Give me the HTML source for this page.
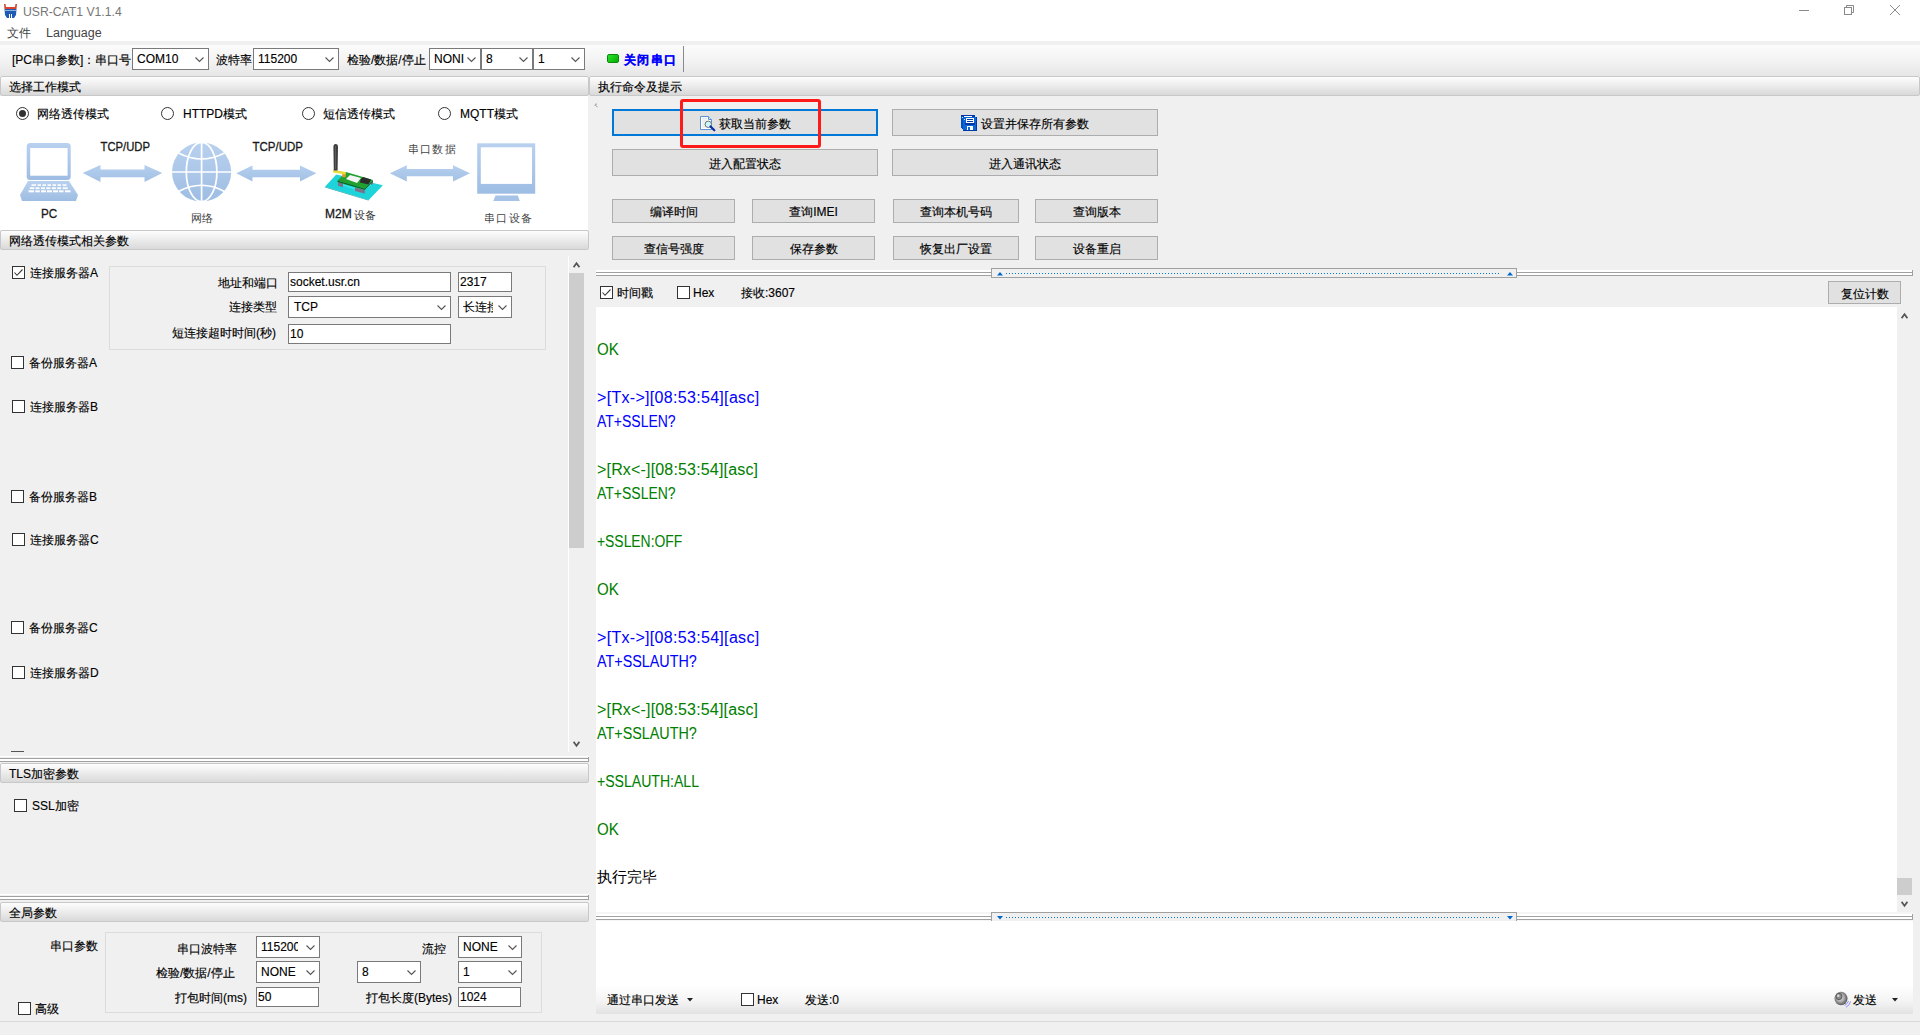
<!DOCTYPE html>
<html><head><meta charset="utf-8">
<style>
*{box-sizing:border-box;margin:0;padding:0}
html,body{width:1920px;height:1035px;overflow:hidden;background:#f0f0f0;font-family:"Liberation Sans",sans-serif;font-size:12px;color:#000;position:relative;-webkit-text-stroke:0.15px currentColor}
.a{position:absolute;white-space:nowrap;line-height:12px}
.hdr{position:absolute;height:20px;border:1px solid #c8c8c8;border-radius:2px;background:linear-gradient(#fdfdfd,#f3f3f3 30%,#d9d9d9)}
.hdr span{position:absolute;left:8px;top:4px;line-height:12px;white-space:nowrap}
.cb{position:absolute;width:13px;height:13px;border:1px solid #333;background:#fff}
.cmb{position:absolute;border:1px solid #7a7a7a;background:#fff;height:22px}
.cmb span{position:absolute;left:4px;top:4px;line-height:12px;font-size:12px;white-space:nowrap}
.chev{position:absolute;right:4px;top:8px;width:9px;height:6px}
.tb{position:absolute;border:1px solid #7a7a7a;background:#fff;height:20px}
.tb span{position:absolute;left:1px;top:3px;line-height:12px}
.btn{position:absolute;background:#e1e1e1;border:1px solid #adadad;text-align:center;line-height:12px}
.btn span{position:absolute;left:0;right:0;top:50%;margin-top:-5px;line-height:12px;white-space:nowrap}
.grp{position:absolute;border:1px solid #dcdcdc}
.rx{position:absolute;left:1px;font-size:16px;line-height:16px;white-space:nowrap;transform-origin:0 0}
.blue{color:#0000ff}.green{color:#008000}
.rx{-webkit-text-stroke:0.05px currentColor}
.split{position:absolute;height:8px}
</style></head><body>

<!-- title bar + menu -->
<div style="position:absolute;left:0;top:0;width:1920px;height:41px;background:#fff"></div>
<svg style="position:absolute;left:4px;top:4px" width="13" height="14" viewBox="0 0 13 14">
 <path d="M0 0 L1.5 0 L2 3 L11 3 L11.5 0 L13 0 L12.5 5 L0.5 5 Z" fill="#d8442e"/>
 <path d="M0.5 5 L12.5 5 L12 11 L10 14 L8 14 L8 10 L7 10 L7 14 L6 14 L6 10 L5 10 L5 14 L3 14 L1 11 Z" fill="#1f5bb5"/>
 <rect x="1" y="6" width="11" height="1" fill="#8fb0e0"/>
</svg>
<div class="a" style="left:23px;top:6px;color:#767676;font-size:12.2px;line-height:13px;-webkit-text-stroke:0">USR-CAT1 V1.1.4</div>
<div class="a" style="left:7px;top:27px;color:#444;-webkit-text-stroke:0">文件</div>
<div class="a" style="left:46px;top:27px;color:#444;font-size:12.5px;-webkit-text-stroke:0">Language</div>
<!-- window controls -->
<div style="position:absolute;left:1799px;top:10px;width:10px;height:1px;background:#8a8a8a"></div>
<svg style="position:absolute;left:1844px;top:5px" width="10" height="10" viewBox="0 0 10 10"><rect x="0.5" y="2.5" width="7" height="7" fill="none" stroke="#8a8a8a"/><path d="M2.5 2.5 V0.5 H9.5 V7.5 H7.5" fill="none" stroke="#8a8a8a"/></svg>
<svg style="position:absolute;left:1890px;top:5px" width="10" height="10" viewBox="0 0 10 10"><path d="M0 0 L10 10 M10 0 L0 10" stroke="#8a8a8a" stroke-width="1"/></svg>

<!-- toolbar -->
<div style="position:absolute;left:0;top:45px;width:1920px;height:31px;background:linear-gradient(#fbfbfb,#f3f3f3 50%,#e6e6e6)"></div>


<div class="a" style="left:12px;top:54px">[PC串口参数]：串口号</div>
<div class="cmb" style="left:132px;top:48px;width:77px"><span style="top:4px">COM10</span><svg class="chev" viewBox="0 0 9 6"><path d="M0.5 0.5 L4.5 4.5 L8.5 0.5" fill="none" stroke="#555" stroke-width="1.1"/></svg></div>
<div class="a" style="left:216px;top:54px">波特率</div>
<div class="cmb" style="left:253px;top:48px;width:86px"><span>115200</span><svg class="chev" viewBox="0 0 9 6"><path d="M0.5 0.5 L4.5 4.5 L8.5 0.5" fill="none" stroke="#555" stroke-width="1.1"/></svg></div>
<div class="a" style="left:347px;top:54px">检验/数据/停止</div>
<div class="cmb" style="left:429px;top:48px;width:52px;overflow:hidden"><span>NONI</span><svg class="chev" viewBox="0 0 9 6"><path d="M0.5 0.5 L4.5 4.5 L8.5 0.5" fill="none" stroke="#555" stroke-width="1.1"/></svg></div>
<div class="cmb" style="left:481px;top:48px;width:52px"><span>8</span><svg class="chev" viewBox="0 0 9 6"><path d="M0.5 0.5 L4.5 4.5 L8.5 0.5" fill="none" stroke="#555" stroke-width="1.1"/></svg></div>
<div class="cmb" style="left:533px;top:48px;width:52px"><span>1</span><svg class="chev" viewBox="0 0 9 6"><path d="M0.5 0.5 L4.5 4.5 L8.5 0.5" fill="none" stroke="#555" stroke-width="1.1"/></svg></div>
<div style="position:absolute;left:607px;top:54px;width:12px;height:9px;border-radius:2px;background:linear-gradient(135deg,#2ee02e,#00b000);border:1px solid #0a8a0a"></div>
<div class="a" style="left:624px;top:54px;color:#0000ff;font-weight:bold;letter-spacing:1.3px">关闭串口</div>
<div style="position:absolute;left:683px;top:46px;width:1px;height:26px;background:#8a8a8a"></div>

<!-- LEFT PANEL -->
<div class="hdr" style="left:0;top:76px;width:589px"><span>选择工作模式</span></div>
<div style="position:absolute;left:0;top:96px;width:588px;height:134px;background:#fff"></div>
<!-- radios -->
<svg style="position:absolute;left:16px;top:107px" width="13" height="13" viewBox="0 0 13 13"><circle cx="6.5" cy="6.5" r="6" fill="#fff" stroke="#333"/><circle cx="6.5" cy="6.5" r="3.5" fill="#333"/></svg>
<div class="a" style="left:37px;top:108px">网络透传模式</div>
<svg style="position:absolute;left:161px;top:107px" width="13" height="13" viewBox="0 0 13 13"><circle cx="6.5" cy="6.5" r="6" fill="#fff" stroke="#333"/></svg>
<div class="a" style="left:183px;top:108px">HTTPD模式</div>
<svg style="position:absolute;left:302px;top:107px" width="13" height="13" viewBox="0 0 13 13"><circle cx="6.5" cy="6.5" r="6" fill="#fff" stroke="#333"/></svg>
<div class="a" style="left:323px;top:108px">短信透传模式</div>
<svg style="position:absolute;left:438px;top:107px" width="13" height="13" viewBox="0 0 13 13"><circle cx="6.5" cy="6.5" r="6" fill="#fff" stroke="#333"/></svg>
<div class="a" style="left:460px;top:108px">MQTT模式</div>
<!-- DIAGRAM -->
<svg style="position:absolute;left:0;top:130px" width="588" height="100" viewBox="0 130 588 100">
 <defs>
  <linearGradient id="bl" x1="0" y1="0" x2="0" y2="1"><stop offset="0" stop-color="#b9d1ef"/><stop offset="1" stop-color="#9ebde3"/></linearGradient>
  <linearGradient id="bl2" x1="0" y1="0" x2="0" y2="1"><stop offset="0" stop-color="#b5cfee"/><stop offset="1" stop-color="#a3c1e5"/></linearGradient>
 </defs>
 <!-- laptop -->
 <rect x="26.7" y="143" width="44" height="37" rx="3.5" fill="url(#bl)"/>
 <rect x="30.2" y="148" width="37.4" height="27.7" fill="#fff"/>
 <path d="M28 181 L69 181 L78 195 L76 201 L22 201 L20 195 Z" fill="url(#bl)"/>
 <rect x="37" y="180" width="23" height="1" fill="#fff"/>
 <g fill="#fff">
  <rect x="31.5" y="184.3" width="4.5" height="1.6"/><rect x="37.5" y="184.3" width="3.5" height="1.6"/><rect x="42.5" y="184.3" width="3.5" height="1.6"/><rect x="47.5" y="184.3" width="3.5" height="1.6"/><rect x="52.5" y="184.3" width="3.5" height="1.6"/><rect x="57.5" y="184.3" width="3.5" height="1.6"/><rect x="62.5" y="184.3" width="4" height="1.6"/>
  <rect x="29.8" y="187.3" width="4.5" height="1.8"/><rect x="35.5" y="187.3" width="4" height="1.8"/><rect x="41" y="187.3" width="4" height="1.8"/><rect x="46.3" y="187.3" width="4" height="1.8"/><rect x="51.8" y="187.3" width="4" height="1.8"/><rect x="57.2" y="187.3" width="4" height="1.8"/><rect x="62.7" y="187.3" width="5" height="1.8"/>
  <rect x="28.5" y="190.3" width="5.5" height="2"/><rect x="35.3" y="190.3" width="4.5" height="2"/><rect x="41" y="190.3" width="5" height="2"/><rect x="47" y="190.3" width="5" height="2"/><rect x="53" y="190.3" width="5" height="2"/><rect x="59" y="190.3" width="4.5" height="2"/><rect x="65" y="190.3" width="5.5" height="2"/>
 </g>
 <!-- arrows -->
 <path d="M82.7 173 L100.5 164.9 L100.5 169.5 L144.5 169.5 L144.5 164.9 L162.3 173 L144.5 181.9 L144.5 177.2 L100.5 177.2 L100.5 181.9 Z" fill="url(#bl2)"/>
 <path d="M236.3 173.3 L252.5 165.4 L252.5 169.8 L300 169.8 L300 165.4 L316.3 173.3 L300 181.5 L300 177.2 L252.5 177.2 L252.5 181.5 Z" fill="url(#bl2)"/>
 <path d="M389.8 173.2 L406.8 165.2 L406.8 169 L453 169 L453 165.2 L470 173.2 L453 181.6 L453 176.2 L406.8 176.2 L406.8 181.6 Z" fill="url(#bl2)"/>
 <!-- globe -->
 <circle cx="201.6" cy="172" r="29.6" fill="url(#bl)"/>
 <g fill="none" stroke="#fff" stroke-width="1.7">
  <line x1="201.6" y1="142" x2="201.6" y2="202"/>
  <line x1="171" y1="172" x2="232" y2="172"/>
  <ellipse cx="201.6" cy="172" rx="15.3" ry="29.6"/>
  <path d="M178.5 153 Q201.6 165 224.5 153"/>
  <path d="M178.5 191.5 Q201.6 179 224.5 191.5"/>
 </g>
 <!-- M2M device -->
 <path d="M325 186.7 L336.2 174.5 L382.9 185.3 L368.7 199.9 Z" fill="#1cd4da"/>
 <path d="M325 186.7 L368.7 199.9 L368.5 200.6 L325.3 187.4 Z" fill="#0fa0a8"/>
 <path d="M343 184 L355 187.5 L365 185 L373 181 L373 183 L364.5 191 L355 189.5 L343 186 Z" fill="#30e4ea"/>
 <path d="M338 182 L343 183.5 L343 187.3 L338 185.8 Z" fill="#7d7088"/>
 <path d="M355 187.5 L364.8 190 L364.8 193.5 L355 191 Z" fill="#7d7088"/>
 <path d="M371 182 L373 181 L373 184 L371 185 Z" fill="#7d7088"/>
 <path d="M337.5 180.5 L346 172 L373 180 L364.5 188.5 Z" fill="#22a030"/>
 <path d="M337.5 180.5 L364.5 188.5 L373 180 L373 181.5 L364.8 190 L337.5 182 Z" fill="#0c6a18"/>
 <path d="M346 179 L350 175 L361 178 L357 183 Z" fill="#f4f4f4"/>
 <path d="M360.5 179.5 L363 177 L371 179.5 L368.5 184.5 L360 182.5 Z" fill="#2b2b2b"/>
 <rect x="342.3" y="172.5" width="3.4" height="4.7" fill="#e09a30"/>
 <path d="M333.2 169.8 L345.7 172 L345.7 174.5 L333.2 172.5 Z" fill="#e6dc3a"/>
 <path d="M333.4 147 Q333.4 144 335.7 144 Q338 144 338 147 L337.6 170.5 L333.8 170.5 Z" fill="#3e3e3e"/>
 <rect x="335" y="146" width="1" height="23" fill="#707070" opacity="0.6"/>
 <!-- monitor -->
 <rect x="477.2" y="143.3" width="58" height="50.4" fill="url(#bl)"/>
 <rect x="480.8" y="147.3" width="51.2" height="36.6" fill="#fff"/>
 <path d="M493.3 201 L495.5 195.5 L517.8 195.5 L519.8 201 Z" fill="#a6c2e6"/>
 <!-- labels -->
 <text x="100.5" y="151.3" font-family="Liberation Sans" font-size="12" fill="#1a1a1a" textLength="49.5" lengthAdjust="spacingAndGlyphs" stroke="#1a1a1a" stroke-width="0.3">TCP/UDP</text>
 <text x="252.5" y="151.3" font-family="Liberation Sans" font-size="12" fill="#1a1a1a" textLength="50.5" lengthAdjust="spacingAndGlyphs" stroke="#1a1a1a" stroke-width="0.3">TCP/UDP</text>
 <text x="41" y="217.6" font-family="Liberation Sans" font-size="12" fill="#1a1a1a" stroke="#1a1a1a" stroke-width="0.3" textLength="16.2" lengthAdjust="spacingAndGlyphs">PC</text>
 <text x="325" y="218" font-family="Liberation Sans" font-size="12" fill="#1a1a1a" stroke="#1a1a1a" stroke-width="0.3">M2M</text>
 <text x="354" y="218.5" font-family="Liberation Serif" font-size="11" fill="#333">设备</text>
 <text x="190.5" y="221.5" font-family="Liberation Serif" font-size="11" fill="#444">网络</text>
 <text x="407.5" y="153" font-family="Liberation Serif" font-size="11" fill="#444" letter-spacing="1.4">串口数据</text>
 <text x="484" y="222" font-family="Liberation Serif" font-size="11" fill="#444" letter-spacing="1.4">串口设备</text>
</svg>

<div class="hdr" style="left:0;top:230px;width:589px"><span>网络透传模式相关参数</span></div>
<!-- servers -->
<div class="cb" style="left:12px;top:266px"><svg width="11" height="11" viewBox="0 0 11 11" style="position:absolute;left:0;top:0"><path d="M1.5 5.5 L4 8.3 L9.5 2.5" fill="none" stroke="#3a3a3a" stroke-width="1.1"/></svg></div>
<div class="a" style="left:30px;top:267px">连接服务器A</div>
<div class="grp" style="left:109px;top:266px;width:437px;height:84px"></div>
<div class="a" style="left:218px;top:277px">地址和端口</div>
<div class="tb" style="left:288px;top:272px;width:163px"><span>socket.usr.cn</span></div>
<div class="tb" style="left:458px;top:272px;width:54px"><span>2317</span></div>
<div class="a" style="left:229px;top:301px">连接类型</div>
<div class="cmb" style="left:288px;top:296px;width:163px"><span style="left:5px">TCP</span><svg class="chev" viewBox="0 0 9 6"><path d="M0.5 0.5 L4.5 4.5 L8.5 0.5" fill="none" stroke="#555" stroke-width="1.1"/></svg></div>
<div class="cmb" style="left:458px;top:296px;width:54px;overflow:hidden"><span style="width:30px;overflow:hidden">长连接</span><svg class="chev" viewBox="0 0 9 6"><path d="M0.5 0.5 L4.5 4.5 L8.5 0.5" fill="none" stroke="#555" stroke-width="1.1"/></svg></div>
<div class="a" style="left:172px;top:327px">短连接超时时间(秒)</div>
<div class="tb" style="left:288px;top:324px;width:163px"><span>10</span></div>

<div class="cb" style="left:11px;top:356px"></div><div class="a" style="left:29px;top:357px">备份服务器A</div>
<div class="cb" style="left:12px;top:400px"></div><div class="a" style="left:30px;top:401px">连接服务器B</div>
<div class="cb" style="left:11px;top:490px"></div><div class="a" style="left:29px;top:491px">备份服务器B</div>
<div class="cb" style="left:12px;top:533px"></div><div class="a" style="left:30px;top:534px">连接服务器C</div>
<div class="cb" style="left:11px;top:621px"></div><div class="a" style="left:29px;top:622px">备份服务器C</div>
<div class="cb" style="left:12px;top:666px"></div><div class="a" style="left:30px;top:667px">连接服务器D</div>
<div style="position:absolute;left:11px;top:751px;width:13px;height:1px;background:#555"></div>
<!-- left scrollbar -->
<div style="position:absolute;left:568px;top:256px;width:1px;height:496px;background:#fff"></div>
<svg style="position:absolute;left:573px;top:261px" width="7" height="8" viewBox="0 0 7 8"><path d="M0.6 6.2 L3.5 2.2 L6.4 6.2" fill="none" stroke="#555" stroke-width="1.7"/></svg>
<div style="position:absolute;left:569px;top:273px;width:15px;height:275px;background:#cdcdcd"></div>
<svg style="position:absolute;left:573px;top:740px" width="7" height="8" viewBox="0 0 7 8"><path d="M0.6 1.8 L3.5 5.8 L6.4 1.8" fill="none" stroke="#555" stroke-width="1.7"/></svg>
<!-- separator -->
<div style="position:absolute;left:0;top:756px;width:589px;height:6px;border-top:1px solid #fff"><div style="position:absolute;left:0;top:1px;width:589px;height:1px;background:#a0a0a0"></div><div style="position:absolute;left:0;top:2px;width:589px;height:2px;background:#fff"></div><div style="position:absolute;left:0;top:4px;width:589px;height:1px;background:#a0a0a0"></div><div style="position:absolute;left:588px;top:0;width:1px;height:5px;background:#a0a0a0"></div></div>

<div class="hdr" style="left:0;top:763px;width:589px"><span>TLS加密参数</span></div>
<div class="cb" style="left:14px;top:799px"></div><div class="a" style="left:32px;top:800px">SSL加密</div>

<div style="position:absolute;left:0;top:894px;width:589px;height:6px;border-top:1px solid #fff"><div style="position:absolute;left:0;top:1px;width:589px;height:1px;background:#a0a0a0"></div><div style="position:absolute;left:0;top:2px;width:589px;height:2px;background:#fff"></div><div style="position:absolute;left:0;top:4px;width:589px;height:1px;background:#a0a0a0"></div><div style="position:absolute;left:588px;top:0;width:1px;height:5px;background:#a0a0a0"></div></div>
<div class="hdr" style="left:0;top:902px;width:589px"><span>全局参数</span></div>
<div class="a" style="left:50px;top:940px">串口参数</div>
<div class="grp" style="left:105px;top:932px;width:437px;height:81px"></div>
<div class="a" style="left:177px;top:943px">串口波特率</div>
<div class="cmb" style="left:256px;top:936px;width:64px;overflow:hidden"><span style="width:37px;overflow:hidden">115200</span><svg class="chev" viewBox="0 0 9 6"><path d="M0.5 0.5 L4.5 4.5 L8.5 0.5" fill="none" stroke="#555" stroke-width="1.1"/></svg></div>
<div class="a" style="left:422px;top:943px">流控</div>
<div class="cmb" style="left:458px;top:936px;width:64px"><span>NONE</span><svg class="chev" viewBox="0 0 9 6"><path d="M0.5 0.5 L4.5 4.5 L8.5 0.5" fill="none" stroke="#555" stroke-width="1.1"/></svg></div>
<div class="a" style="left:156px;top:967px">检验/数据/停止</div>
<div class="cmb" style="left:256px;top:961px;width:64px"><span>NONE</span><svg class="chev" viewBox="0 0 9 6"><path d="M0.5 0.5 L4.5 4.5 L8.5 0.5" fill="none" stroke="#555" stroke-width="1.1"/></svg></div>
<div class="cmb" style="left:357px;top:961px;width:64px"><span>8</span><svg class="chev" viewBox="0 0 9 6"><path d="M0.5 0.5 L4.5 4.5 L8.5 0.5" fill="none" stroke="#555" stroke-width="1.1"/></svg></div>
<div class="cmb" style="left:458px;top:961px;width:64px"><span>1</span><svg class="chev" viewBox="0 0 9 6"><path d="M0.5 0.5 L4.5 4.5 L8.5 0.5" fill="none" stroke="#555" stroke-width="1.1"/></svg></div>
<div class="a" style="left:175px;top:992px">打包时间(ms)</div>
<div class="tb" style="left:256px;top:987px;width:63px"><span>50</span></div>
<div class="a" style="left:366px;top:992px">打包长度(Bytes)</div>
<div class="tb" style="left:458px;top:987px;width:63px"><span>1024</span></div>
<div class="cb" style="left:18px;top:1002px"></div><div class="a" style="left:35px;top:1003px">高级</div>
<div style="position:absolute;left:0;top:1021px;width:1920px;height:1px;background:#d9d9d9"></div>

<!-- RIGHT PANEL -->
<svg style="position:absolute;left:594px;top:103px" width="5" height="5" viewBox="0 0 5 5"><path d="M1 3 L1.5 1.2 L3 1 M2 3 L3.5 3.8" stroke="#9a9a9a" stroke-width="1" fill="none"/></svg>
<div class="hdr" style="left:589px;top:76px;width:1331px"><span>执行命令及提示</span></div>
<div class="btn" style="left:612px;top:109px;width:266px;height:27px;border:2px solid #0078d7"><span style="left:105px;right:auto;text-align:left">获取当前参数</span></div>
<svg style="position:absolute;left:699px;top:115px" width="17" height="17" viewBox="699 115 17 17">
 <path d="M700.5 116.5 H708.5 L711.5 119.5 V129.5 H700.5 Z" fill="#fff" stroke="#5b93d3" stroke-width="1"/>
 <path d="M708.5 116.5 V119.5 H711.5" fill="#cfe0f5" stroke="#5b93d3" stroke-width="1"/>
 <g fill="#d8d8d8"><rect x="702" y="118.5" width="5" height="0.8"/><rect x="702" y="120.5" width="5" height="0.8"/><rect x="702" y="122.5" width="3" height="0.8"/><rect x="702" y="124.5" width="3" height="0.8"/><rect x="702" y="126.5" width="4" height="0.8"/></g>
 <circle cx="708.3" cy="124.3" r="3.2" fill="#c8fafa" stroke="#707070" stroke-width="1"/>
 <path d="M710.5 126.5 L714.3 130.3" stroke="#0a2ea0" stroke-width="2.2" stroke-linecap="round"/>
</svg>
<div class="btn" style="left:892px;top:109px;width:266px;height:27px"><span style="left:88px;right:auto;text-align:left">设置并保存所有参数</span></div>
<svg style="position:absolute;left:960px;top:114px" width="18" height="18" viewBox="960 114 18 18" shape-rendering="crispEdges">
 <path d="M961 115 H975 V117 H977 V131 H964 L961 128 Z" fill="#0038a8"/>
 <rect x="963" y="117" width="13" height="13" fill="#0a66d6"/>
 <rect x="961" y="116" width="2" height="12" fill="#0050c0"/>
 <rect x="964" y="116" width="8" height="1" fill="#fff"/>
 <rect x="962" y="117" width="1" height="1" fill="#e0e8ff"/>
 <rect x="964" y="119" width="1" height="1" fill="#e0e8ff"/>
 <rect x="966" y="118" width="8" height="5" fill="#fff"/>
 <rect x="967" y="119" width="6" height="1" fill="#0038a8"/>
 <rect x="967" y="121" width="6" height="1" fill="#0038a8"/>
 <rect x="965" y="123" width="10" height="2" fill="#0038a8"/>
 <rect x="967" y="126" width="6" height="4" fill="#fff"/>
 <rect x="968" y="127" width="2" height="3" fill="#0a66d6"/>
 <rect x="963" y="130" width="14" height="1" fill="#0038a8"/>
</svg>
<div class="btn" style="left:612px;top:149px;width:266px;height:27px"><span>进入配置状态</span></div>
<div class="btn" style="left:892px;top:149px;width:266px;height:27px"><span>进入通讯状态</span></div>
<div class="btn" style="left:612px;top:199px;width:123px;height:24px"><span>编译时间</span></div>
<div class="btn" style="left:752px;top:199px;width:123px;height:24px"><span>查询IMEI</span></div>
<div class="btn" style="left:893px;top:199px;width:126px;height:24px"><span>查询本机号码</span></div>
<div class="btn" style="left:1035px;top:199px;width:123px;height:24px"><span>查询版本</span></div>
<div class="btn" style="left:612px;top:236px;width:123px;height:24px"><span>查信号强度</span></div>
<div class="btn" style="left:752px;top:236px;width:123px;height:24px"><span>保存参数</span></div>
<div class="btn" style="left:893px;top:236px;width:126px;height:24px"><span>恢复出厂设置</span></div>
<div class="btn" style="left:1035px;top:236px;width:123px;height:24px"><span>设备重启</span></div>
<div style="position:absolute;left:680px;top:99px;width:141px;height:49px;border:3px solid #ff1a1a;border-radius:3px"></div>

<div style="position:absolute;left:596px;top:270px;width:1317px;height:6px">
 <div style="position:absolute;left:0;top:0;width:1317px;height:2px;background:#fff"></div>
 <div style="position:absolute;left:0;top:2px;width:1317px;height:1px;background:#a0a0a0"></div>
 <div style="position:absolute;left:0;top:3px;width:1317px;height:2px;background:#fff"></div>
 <div style="position:absolute;left:0;top:5px;width:1317px;height:1px;background:#a0a0a0"></div>
 <div style="position:absolute;left:1316px;top:0;width:1px;height:6px;background:#a0a0a0"></div>
</div>
<div style="position:absolute;left:991px;top:268px;width:526px;height:10px;border:1px solid #a0a0a0;background:#f0f0f0">
 <svg style="position:absolute;left:5px;top:3px" width="6" height="4" viewBox="0 0 6 4"><path d="M0 3.5 L3 0 L6 3.5 Z" fill="#0066cc"/></svg>
 <div style="position:absolute;left:14px;top:4px;width:494px;height:1px;background:repeating-linear-gradient(90deg,#0078d7 0 1px,transparent 1px 3px)"></div>
 <svg style="position:absolute;left:515px;top:3px" width="6" height="4" viewBox="0 0 6 4"><path d="M0 3.5 L3 0 L6 3.5 Z" fill="#0066cc"/></svg>
</div>
<div class="cb" style="left:600px;top:286px"><svg width="11" height="11" viewBox="0 0 11 11" style="position:absolute;left:0;top:0"><path d="M1.5 5.5 L4 8.3 L9.5 2.5" fill="none" stroke="#3a3a3a" stroke-width="1.1"/></svg></div>
<div class="a" style="left:617px;top:287px">时间戳</div>
<div class="cb" style="left:677px;top:286px"></div><div class="a" style="left:693px;top:287px">Hex</div>
<div class="a" style="left:741px;top:287px">接收:3607</div>
<div class="btn" style="left:1828px;top:281px;width:73px;height:23px"><span>复位计数</span></div>

<div style="position:absolute;left:596px;top:307px;width:1301px;height:605px;background:#fff;overflow:hidden">
 <div class="rx green" style="top:35px;transform:scaleX(0.94)">OK</div>
 <div class="rx blue" style="top:83px;letter-spacing:0.31px">&gt;[Tx-&gt;][08:53:54][asc]</div>
 <div class="rx blue" style="top:107px;transform:scaleX(0.874)">AT+SSLEN?</div>
 <div class="rx green" style="top:155px;letter-spacing:0.17px">&gt;[Rx&lt;-][08:53:54][asc]</div>
 <div class="rx green" style="top:179px;transform:scaleX(0.874)">AT+SSLEN?</div>
 <div class="rx green" style="top:227px;transform:scaleX(0.868)">+SSLEN:OFF</div>
 <div class="rx green" style="top:275px;transform:scaleX(0.94)">OK</div>
 <div class="rx blue" style="top:323px;letter-spacing:0.31px">&gt;[Tx-&gt;][08:53:54][asc]</div>
 <div class="rx blue" style="top:347px;transform:scaleX(0.896)">AT+SSLAUTH?</div>
 <div class="rx green" style="top:395px;letter-spacing:0.17px">&gt;[Rx&lt;-][08:53:54][asc]</div>
 <div class="rx green" style="top:419px;transform:scaleX(0.896)">AT+SSLAUTH?</div>
 <div class="rx green" style="top:467px;transform:scaleX(0.879)">+SSLAUTH:ALL</div>
 <div class="rx green" style="top:515px;transform:scaleX(0.94)">OK</div>
 <div class="rx" style="top:562px;font-size:14.5px">执行完毕</div>
</div>
<!-- right scrollbar -->
<svg style="position:absolute;left:1901px;top:312px" width="7" height="8" viewBox="0 0 7 8"><path d="M0.6 6.2 L3.5 2.2 L6.4 6.2" fill="none" stroke="#555" stroke-width="1.7"/></svg>
<div style="position:absolute;left:1897px;top:878px;width:15px;height:17px;background:#cdcdcd"></div>
<svg style="position:absolute;left:1901px;top:900px" width="7" height="8" viewBox="0 0 7 8"><path d="M0.6 1.8 L3.5 5.8 L6.4 1.8" fill="none" stroke="#555" stroke-width="1.7"/></svg>

<div style="position:absolute;left:596px;top:912px;width:1317px;height:9px;background:#f5f5f5">
 <div style="position:absolute;left:0;top:2px;width:1317px;height:2px;background:#fff"></div>
 <div style="position:absolute;left:0;top:4px;width:1317px;height:1px;background:#a0a0a0"></div>
 <div style="position:absolute;left:0;top:5px;width:1317px;height:2px;background:#fff"></div>
 <div style="position:absolute;left:0;top:7px;width:1317px;height:1px;background:#a0a0a0"></div>
 <div style="position:absolute;left:1316px;top:2px;width:1px;height:6px;background:#a0a0a0"></div>
</div>
<div style="position:absolute;left:991px;top:912px;width:526px;height:10px;border:1px solid #a0a0a0;background:#f0f0f0">
 <svg style="position:absolute;left:5px;top:3px" width="6" height="4" viewBox="0 0 6 4"><path d="M0 0 L6 0 L3 3.5 Z" fill="#0066cc"/></svg>
 <div style="position:absolute;left:14px;top:4px;width:494px;height:1px;background:repeating-linear-gradient(90deg,#0078d7 0 1px,transparent 1px 3px)"></div>
 <svg style="position:absolute;left:515px;top:3px" width="6" height="4" viewBox="0 0 6 4"><path d="M0 0 L6 0 L3 3.5 Z" fill="#0066cc"/></svg>
</div>
<div style="position:absolute;left:596px;top:921px;width:1317px;height:93px;background:linear-gradient(#fff 0,#fff 64px,#f4f4f4 80px,#e2e2e2 93px)"></div>
<div class="a" style="left:607px;top:994px">通过串口发送</div>
<svg style="position:absolute;left:687px;top:998px" width="6" height="4" viewBox="0 0 6 4"><path d="M0 0 H6 L3 3.5Z" fill="#222"/></svg>
<div class="cb" style="left:741px;top:993px"></div><div class="a" style="left:757px;top:994px">Hex</div>
<div class="a" style="left:805px;top:994px">发送:0</div>
<svg style="position:absolute;left:1833px;top:991px" width="18" height="17" viewBox="1833 991 18 17">
 <defs><radialGradient id="spk" cx="0.45" cy="0.45" r="0.6"><stop offset="0" stop-color="#e8e8e8"/><stop offset="0.45" stop-color="#b0b0b0"/><stop offset="0.8" stop-color="#707070"/><stop offset="1" stop-color="#404040"/></radialGradient></defs>
 <ellipse cx="1841" cy="998.5" rx="6.5" ry="6.8" fill="url(#spk)"/>
 <ellipse cx="1839" cy="996.5" rx="3" ry="3.2" fill="#8a8a8a" stroke="#505050" stroke-width="0.8"/>
 <ellipse cx="1838.3" cy="995.8" rx="1.2" ry="1.2" fill="#e0e0e0"/>
 <path d="M1844.5 1005.5 Q1847.5 1004 1848.5 1001 M1846 1007.3 Q1850 1005 1850.5 1001.5" fill="none" stroke="#8080f0" stroke-width="0.9"/>
</svg>
<div class="a" style="left:1853px;top:994px">发送</div>
<svg style="position:absolute;left:1892px;top:998px" width="6" height="4" viewBox="0 0 6 4"><path d="M0 0 H6 L3 3.5Z" fill="#222"/></svg>

</body></html>
